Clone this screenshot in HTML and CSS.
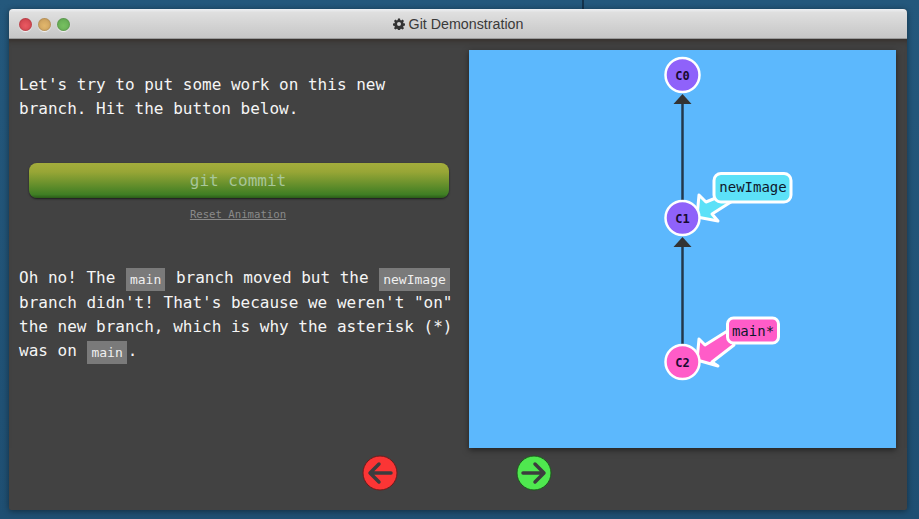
FILE: index.html
```html
<!DOCTYPE html>
<html lang="en">
<head>
  <meta charset="UTF-8">
  <meta name="viewport" content="width=device-width, initial-scale=1.0">
  <title>Git Demonstration</title>
  <link rel="stylesheet" href="styles.css">
</head>
<body>
  <div class="desktop-line"></div>
  <div class="window">
    <div class="titlebar">
      <div class="lights">
        <span class="light red"></span>
        <span class="light yellow"></span>
        <span class="light green"></span>
      </div>
      <div class="title">
        <svg class="gear" viewBox="0 0 24 24" width="12" height="12">
          <path d="M10 1h4l.6 3.2 1.9.8 2.7-1.8 2.8 2.8-1.8 2.7.8 1.9 3 .6v4l-3 .6-.8 1.9 1.8 2.7-2.8 2.8-2.7-1.8-1.9.8-.6 3h-4l-.6-3-1.9-.8-2.7 1.8-2.8-2.8 1.8-2.7-.8-1.9-3-.6v-4l3-.6.8-1.9-1.8-2.7 2.8-2.8 2.7 1.8 1.9-.8zM12 8a4 4 0 1 0 0 8 4 4 0 0 0 0-8z" fill-rule="evenodd"/>
        </svg>
        <span>Git Demonstration</span>
      </div>
    </div>
    <div class="content">
      <div class="left-col">
        <p class="intro">Let's try to put some work on this new<br>branch. Hit the button below.</p>
        <button type="button" class="commit-btn">git commit</button>
        <a href="#" class="reset-link">Reset Animation</a>
        <p class="after">Oh no! The <code>main</code> branch moved but the <code>newImage</code><br>branch didn't! That's because we weren't "on"<br>the new branch, which is why the asterisk (*)<br>was on <code>main</code>.</p>
      </div>
      <svg class="graph" viewBox="0 0 427 398" width="427" height="398">
        <line class="edge" x1="213.500" y1="54" x2="213.500" y2="152"/>
        <polygon class="edge-head" points="213.500,44 204.500,54 222.500,54"/>
        <line class="edge" x1="213.500" y1="197" x2="213.500" y2="295"/>
        <polygon class="edge-head" points="213.500,187 204.500,197 222.500,197"/>

        <polygon class="tag-arrow cyan" points="228,167 230,145 237,152 254,145 265,150 243,164 249,171"/>
        <rect class="tag-box cyan" x="245" y="123.500" width="77" height="28.500" rx="7"/>
        <text class="tag-text" x="284" y="142">newImage</text>

        <polygon class="tag-arrow pink" points="228,310 230,289 236,295 260,280 265,295 243,312 249,316"/>
        <rect class="tag-box pink" x="258.500" y="268" width="51" height="25" rx="6"/>
        <text class="tag-text" x="284" y="286">main*</text>

        <circle class="node purple" cx="213.500" cy="25" r="17"/>
        <text class="node-text" x="213.500" y="29.500">C0</text>
        <circle class="node purple" cx="213.500" cy="168" r="17"/>
        <text class="node-text" x="213.500" y="172.500">C1</text>
        <circle class="node pink" cx="213.500" cy="312" r="17"/>
        <text class="node-text" x="213.500" y="316.500">C2</text>
      </svg>
    </div>
    <div class="nav">
      <svg class="nav-btn" viewBox="0 0 36 36" width="36" height="36">
        <circle class="nav-red" cx="18" cy="18" r="17"/>
        <path class="nav-arrow" d="M29 18H9M17 9l-9 9 9 9"/>
      </svg>
      <svg class="nav-btn" viewBox="0 0 36 36" width="36" height="36">
        <circle class="nav-green" cx="18" cy="18" r="17"/>
        <path class="nav-arrow" d="M7 18h20M19 9l9 9-9 9"/>
      </svg>
    </div>
  </div>
</body>
</html>
```

FILE: styles.css
```css
html, body {
  height: 100%;
}
body {
  background: linear-gradient(180deg, #24587c, #1f4f72);
  font-family: "DejaVu Sans Mono", monospace;
  margin: 0;
  padding: 0;
  overflow: hidden;
}
.desktop-line {
  width: 2px;
  height: 9px;
  margin-left: 582px;
  background-color: #14334c;
}
.window {
  width: 898px;
  height: 501px;
  margin-left: 9px;
  display: flex;
  flex-direction: column;
  background-color: #424242;
  border-radius: 4px 4px 2px 2px;
  box-shadow: 0 1px 6px rgba(0, 0, 0, 0.45);
}
.titlebar {
  height: 30px;
  flex-shrink: 0;
  display: flex;
  align-items: center;
  justify-content: center;
  position: relative;
  border-radius: 4px 4px 0 0;
  background: linear-gradient(180deg, #eef0f3 0, #dfdfdf 12%, #c6c6c6 100%);
  border-bottom: 1px solid #9a9a9a;
  box-sizing: border-box;
}
.lights {
  position: absolute;
  left: 10px;
  top: 9px;
  display: flex;
  gap: 6px;
}
.light {
  width: 13px;
  height: 13px;
  border-radius: 50%;
  box-shadow: 0 1px 1px #f4f4f4, inset 0 0 2px rgba(0, 0, 0, 0.3);
}
.light.red {
  background: radial-gradient(circle at 50% 60%, #ea5a62, #c63c46);
}
.light.yellow {
  background: radial-gradient(circle at 50% 60%, #e2b76c, #c4995a);
}
.light.green {
  background: radial-gradient(circle at 50% 60%, #77c060, #5ea450);
}
.title {
  display: flex;
  align-items: center;
  gap: 4px;
  font-family: "Liberation Sans", Arial, sans-serif;
  font-size: 14.250px;
  color: #3a3a3a;
}
.gear {
  fill: #333;
}
.content {
  display: flex;
  height: 409px;
  flex-shrink: 0;
  box-shadow: inset 0 6px 6px -5px rgba(40, 25, 15, 0.6);
}
.left-col {
  width: 440px;
  padding: 34px 0 0 10px;
  margin-right: 10px;
  display: flex;
  flex-direction: column;
  color: #f5f5f5;
  font-size: 16px;
  line-height: 24.300px;
}
.left-col p {
  margin: 0;
  white-space: nowrap;
}
.commit-btn {
  width: 420px;
  height: 35px;
  margin: 41px 0 0 10px;
  padding: 0 2px 0 0;
  border: 0;
  border-radius: 8px;
  background: linear-gradient(180deg, #a4ad3c 0, #98a636 25%, #3f7e24 90%, #2a5c18 100%);
  box-shadow: 0 1px 2px rgba(0, 0, 0, 0.6);
  color: #a8c69a;
  font-family: "DejaVu Sans Mono", monospace;
  font-size: 16px;
}
.reset-link {
  align-self: center;
  margin: 9px 0 0 -2px;
  font-size: 10.670px;
  line-height: 16px;
  color: #8a8a8a;
}
.after {
  margin-top: 43px !important;
}
code {
  display: inline-block;
  margin: 0 1px;
  padding: 0 4px;
  background-color: #7a7a7a;
  font-family: "DejaVu Sans Mono", monospace;
  font-size: 13px;
  line-height: 23px;
  color: #efefef;
  vertical-align: -1px;
}
.graph {
  display: block;
  margin-top: 11px;
  background-color: #5cb8fd;
  box-shadow: 0 2px 6px rgba(0, 0, 0, 0.5);
}
.edge {
  stroke: #22384c;
  stroke-width: 2.500;
}
.edge-head {
  fill: #333;
}
.tag-arrow, .tag-box {
  stroke: #fff;
  stroke-width: 3;
  stroke-linejoin: round;
}
.cyan {
  fill: #5ce1f8;
}
.pink {
  fill: #ff5cc8;
}
.purple {
  fill: #8f62fa;
}
.tag-text {
  font-size: 14px;
  fill: #10182c;
  text-anchor: middle;
}
.node {
  stroke: #fff;
  stroke-width: 2.500;
}
.node-text {
  font-size: 12px;
  font-weight: bold;
  fill: #180a30;
  text-anchor: middle;
}
.nav {
  display: flex;
  justify-content: center;
  gap: 118.500px;
  padding: 7px 2px 0 0;
}
.nav-btn {
  display: block;
}
.nav-red {
  fill: #fb3535;
  stroke: #6e1a1a;
  stroke-width: 1;
}
.nav-green {
  fill: #4fe84f;
  stroke: #1c5a1c;
  stroke-width: 1;
}
.nav-arrow {
  fill: none;
  stroke: #3c3c3e;
  stroke-width: 3.500;
  stroke-linecap: round;
  stroke-linejoin: round;
}
```
